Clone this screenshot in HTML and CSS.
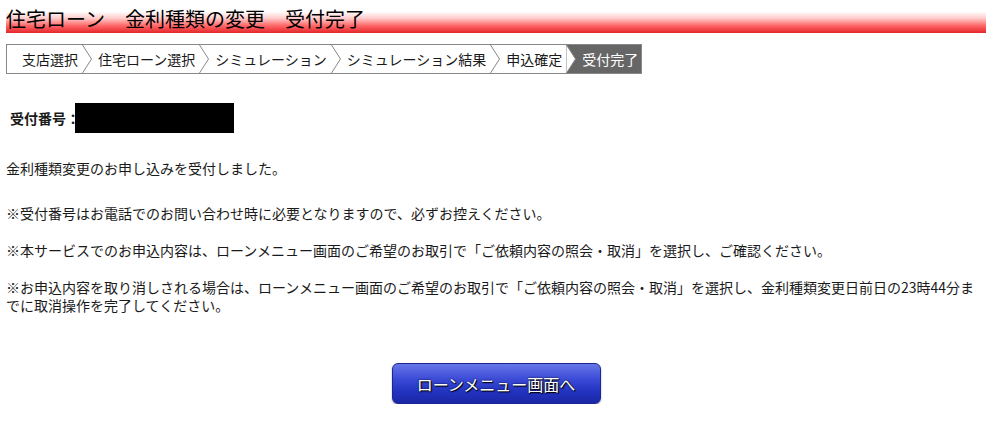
FILE: index.html
```html
<!DOCTYPE html>
<html lang="ja">
<head>
    <meta charset="UTF-8">
    <meta name="viewport" content="width=device-width, initial-scale=1.0">
    <title>住宅ローン 金利種類の変更 受付完了</title>
    <link rel="stylesheet" href="styles.css">
</head>
<body>

    <div class="page">
        <h1 class="page-title">住宅ローン　金利種類の変更　受付完了</h1>

        <!-- 手続きの流れ -->
        <ol class="steps">
            <li class="step step-first">支店選択</li>
            <li class="sep"><svg width="10" height="28" viewBox="0 0 10 28"><polyline points="0.5,0 9.5,14 0.5,28" fill="none" stroke="#888" stroke-width="1"/></svg></li>
            <li class="step">住宅ローン選択</li>
            <li class="sep"><svg width="10" height="28" viewBox="0 0 10 28"><polyline points="0.5,0 9.5,14 0.5,28" fill="none" stroke="#888" stroke-width="1"/></svg></li>
            <li class="step">シミュレーション</li>
            <li class="sep"><svg width="10" height="28" viewBox="0 0 10 28"><polyline points="0.5,0 9.5,14 0.5,28" fill="none" stroke="#888" stroke-width="1"/></svg></li>
            <li class="step">シミュレーション結果</li>
            <li class="sep"><svg width="10" height="28" viewBox="0 0 10 28"><polyline points="0.5,0 9.5,14 0.5,28" fill="none" stroke="#888" stroke-width="1"/></svg></li>
            <li class="step">申込確定</li>
            <li class="sep sep-current"><svg width="10" height="28" viewBox="0 0 10 28"><polygon points="0,0 0.5,0 9.5,14 0.5,28 0,28" fill="#fff" stroke="#888" stroke-width="1"/></svg></li>
            <li class="step step-current">受付完了</li>
        </ol>

        <div class="receipt">
            <span class="receipt-label">受付番号：</span><span class="receipt-no"></span>
        </div>

        <p class="msg msg-done">金利種類変更のお申し込みを受付しました。</p>

        <p class="msg note-first">※受付番号はお電話でのお問い合わせ時に必要となりますので、必ずお控えください。</p>
        <p class="msg note">※本サービスでのお申込内容は、ローンメニュー画面のご希望のお取引で「ご依頼内容の照会・取消」を選択し、ご確認ください。</p>
        <p class="msg note">※お申込内容を取り消しされる場合は、ローンメニュー画面のご希望のお取引で「ご依頼内容の照会・取消」を選択し、金利種類変更日前日の23時44分までに取消操作を完了してください。</p>

        <button class="btn-menu" type="button">ローンメニュー画面へ</button>
    </div>

</body>
</html>
```

FILE: styles.css
```css
body {
    font-family: "Noto Sans CJK JP", "Noto Sans", sans-serif;
    font-size: 14px;
    color: #1a1a1a;
    background-color: #fff;
    margin: 0;
    padding: 0;
}

.page {
    padding: 0 6px;
}

.page-title {
    margin: 0;
    height: 33px;
    padding-top: 4px;
    box-sizing: border-box;
    font-size: 20px;
    font-weight: normal;
    line-height: 29px;
    color: #000;
    background: linear-gradient(to bottom, #fff 0%, #fff 35%, #fcc 55%, #f66 78%, #e3262b 100%);
}

.steps {
    display: flex;
    width: max-content;
    list-style: none;
    margin: 11px 0 0;
    padding: 0;
    border: 1px solid #888;
    height: 28px;
}

.step {
    line-height: 28px;
    padding: 0 4px 0 6px;
    white-space: nowrap;
}

.step-first {
    padding-left: 15px;
}

.step-current {
    background-color: #666;
    color: #fff;
    padding-right: 3px;
}

.sep {
    display: flex;
}

.sep-current {
    background-color: #666;
}

.receipt {
    display: flex;
    align-items: center;
    margin-top: 29px;
    padding-left: 4px;
}

.receipt-label {
    font-weight: bold;
    margin-right: -5px;
}

.receipt-no {
    display: inline-block;
    width: 159px;
    height: 30px;
    background-color: #000;
}

.msg {
    margin: 19px 0 0;
    line-height: 18px;
}

.msg-done {
    margin-top: 26px;
}

.note-first {
    margin-top: 27px;
}

.btn-menu {
    display: block;
    margin: 49px auto 0;
    width: 209px;
    height: 41px;
    padding: 0;
    font-family: inherit;
    font-size: 16px;
    color: #fff;
    text-shadow: 0 0 2px #000, 1px 1px 1px #000;
    border: 1px solid #1b2690;
    border-radius: 6px;
    background: linear-gradient(to bottom, #6677e8 0%, #3a4ad6 40%, #2233c0 70%, #1a27a6 100%);
    box-shadow: 0 1px 2px rgba(0, 0, 0, 0.35);
    cursor: pointer;
}

.btn-menu:hover {
    background: linear-gradient(to bottom, #7787f0 0%, #4858e0 40%, #2e3fcc 70%, #2231b4 100%);
}
```
